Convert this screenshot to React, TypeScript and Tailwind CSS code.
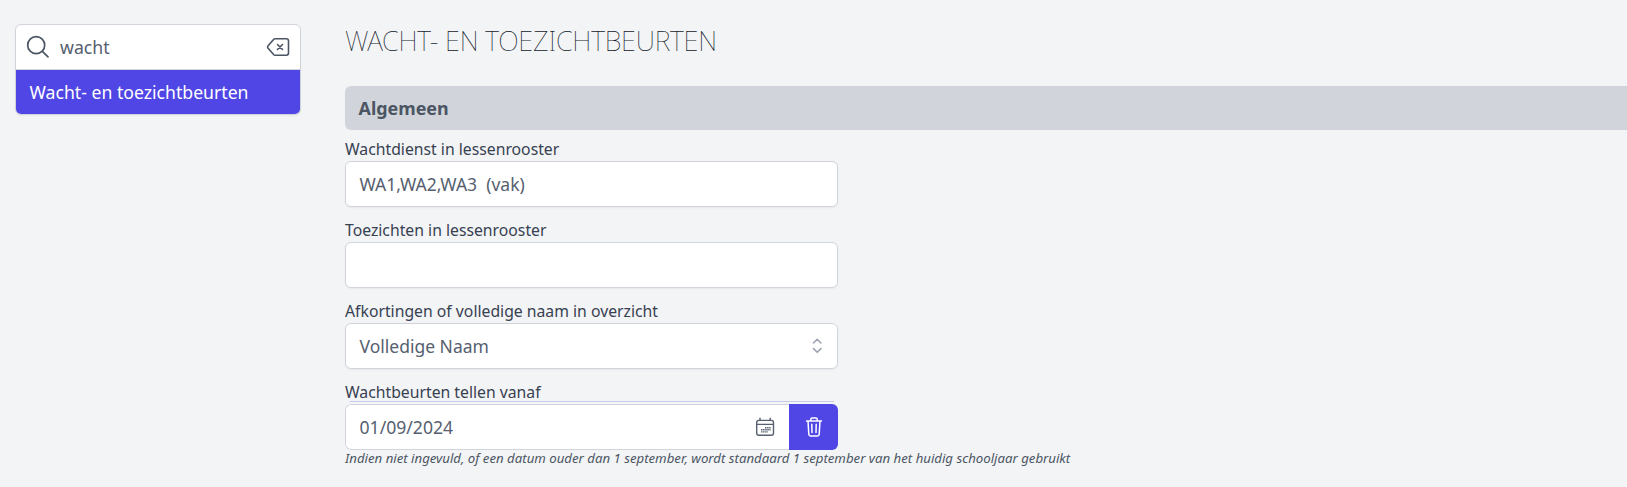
import { ReactNode } from "react";

function Field({ label, children }: { label: string; children: ReactNode }) {
  return (
    <div className="h-[81px]">
      <label className="block h-[23px] text-[15.75px] leading-[23px] text-[#374151]">{label}</label>
      {children}
    </div>
  );
}

const box =
  "flex h-[46px] w-[493px] items-center rounded-md border border-[#d1d5db] bg-white px-[13.5px] text-[17.5px] text-[#566070] shadow-xs";

function SearchIcon() {
  return (
    <svg className="size-6 shrink-0" viewBox="0 0 24 24" fill="none" stroke="currentColor" strokeWidth="1.7" strokeLinecap="round">
      <circle cx="10.2" cy="10.2" r="8.5" />
      <path d="m16.4 16.4 5.6 5.5" />
    </svg>
  );
}

function BackspaceIcon() {
  return (
    <svg className="size-6 shrink-0" viewBox="0 0 24 24" fill="none" stroke="currentColor" strokeWidth="1.6" strokeLinecap="round" strokeLinejoin="round">
      <path d="M7.8 4.2 1.9 11.1a1.4 1.4 0 0 0 0 1.8l5.9 6.9q.5.5 1.2.5h11.3a2.2 2.2 0 0 0 2.2-2.2V5.9a2.2 2.2 0 0 0-2.2-2.2H9q-.7 0-1.2.5Z" />
      <path d="m11.5 9.5 5 5m0-5-5 5" />
    </svg>
  );
}

function CalendarIcon() {
  return (
    <svg className="size-5" viewBox="0 0 20 20" fill="none" stroke="currentColor" strokeWidth="1.4">
      <rect x="1.7" y="3.4" width="16.8" height="14.8" rx="2.2" />
      <path d="M1.7 7.4h16.8M5 .8v2.4M15.2.8v2.4" />
      <path d="M10 10.7h5.6M6 12.8h9.6M6 14.9h7" strokeDasharray="1.5 .6" />
    </svg>
  );
}

function TrashIcon() {
  return (
    <svg className="size-[22px]" viewBox="0 0 22 22" fill="none" stroke="currentColor" strokeWidth="1.5" strokeLinecap="round" strokeLinejoin="round">
      <path d="M3.5 5h15M5 5l.8 13.3c.1 1 .8 1.7 1.7 1.7h7c.9 0 1.6-.7 1.7-1.7L17 5M7.8 5V3.3c0-.8.6-1.3 1.3-1.3h3.8c.7 0 1.3.5 1.3 1.3V5M8.8 8.2l.2 8.3M13.2 8.2l-.2 8.3" />
    </svg>
  );
}

export default function App() {
  return (
    <div className="flex h-[487px] overflow-hidden bg-[#f3f4f6] font-['Noto_Sans',sans-serif]">
      <aside className="w-[345px] shrink-0 pt-6 pl-[15px]">
        <div className="w-[286px] overflow-hidden rounded-md border border-[#d1d5db] bg-white shadow-xs">
          <div className="flex h-[45px] items-center border-b border-[#d1d5db] px-[10px] text-[#4b5563]">
            <SearchIcon />
            <span className="ml-[10px] flex-1 pt-px text-[17.7px] text-[#566070]">wacht</span>
            <BackspaceIcon />
          </div>
          <div className="flex h-[44px] items-center bg-[#4f46e5] px-[13.5px] pt-px text-[17.65px] text-white">
            Wacht- en toezichtbeurten
          </div>
        </div>
      </aside>
      <main className="min-w-0 flex-1 pt-[22px]">
        <h1 className="h-[64px] text-[27px] leading-[38px] font-thin tracking-[-0.18px] text-[#111827] uppercase">Wacht- en toezichtbeurten</h1>
        <h2 className="flex h-[44px] items-center rounded-l-md bg-[#d1d5db] px-[13.5px] text-[17.9px] font-bold text-[#4b5563]">
          Algemeen
        </h2>
        <div className="pt-[8px]">
          <Field label="Wachtdienst in lessenrooster">
            <div className={`${box} whitespace-pre`}>{"WA1,WA2,WA3  (vak)"}</div>
          </Field>
          <Field label="Toezichten in lessenrooster">
            <div className={box} />
          </Field>
          <Field label="Afkortingen of volledige naam in overzicht">
            <div className={`${box} justify-between`}>
              Volledige Naam
              <svg className="-mr-[3px] size-[18px] text-[#9ca3af]" viewBox="0 0 18 18" fill="none" stroke="currentColor" strokeWidth="1.6" strokeLinecap="round" strokeLinejoin="round">
                <path d="m4.5 6 3.7-3.7L11.9 6M4.5 11.6l3.7 3.7 3.7-3.7" />
              </svg>
            </div>
          </Field>
          <div className="relative">
            <label className="block h-[23px] text-[15.75px] leading-[23px] text-[#374151]">Wachtbeurten tellen vanaf</label>
            <div className="absolute top-[20px] left-[5px] h-px w-[484px] bg-[#c9cbec]" />
            <div className="flex h-[46px] w-[493px] overflow-hidden rounded-md">
              <div className="flex flex-1 items-center justify-between rounded-l-md border border-r-0 border-[#d1d5db] bg-white pr-[14px] pl-[13.5px] text-[17.6px] text-[#566070]">
                01/09/2024
                <CalendarIcon />
              </div>
              <button className="flex w-[49px] items-center justify-center bg-[#4f46e5] text-white">
                <TrashIcon />
              </button>
            </div>
            <p className="text-[13.21px] leading-[17px] text-[#4b5563] italic">
              Indien niet ingevuld, of een datum ouder dan 1 september, wordt standaard 1 september van het huidig schooljaar gebruikt
            </p>
          </div>
        </div>
      </main>
    </div>
  );
}
